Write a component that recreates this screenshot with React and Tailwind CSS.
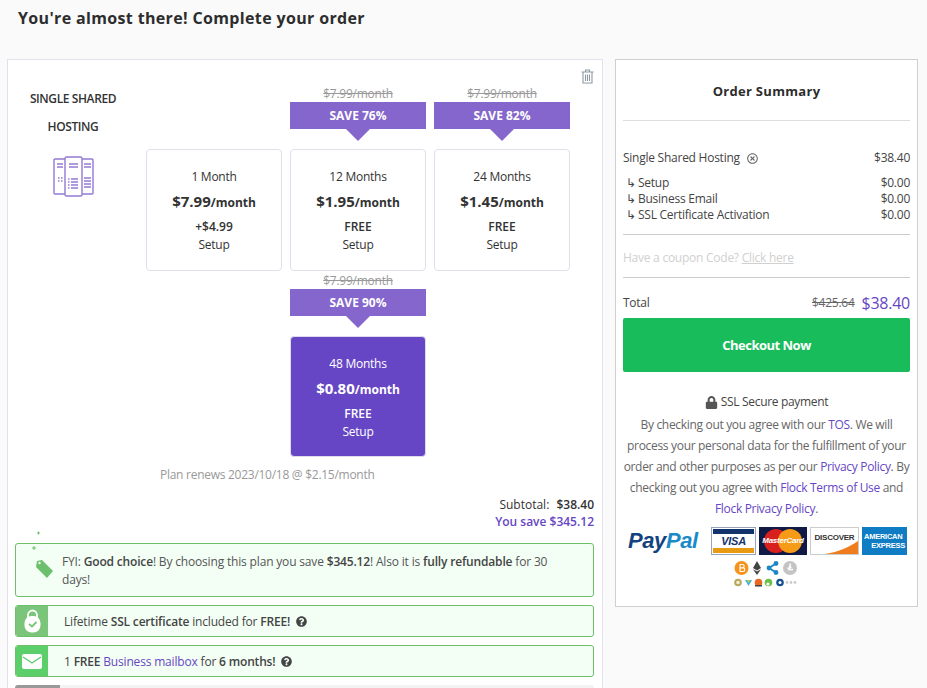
import React from "react";
import { FaQuestionCircle, FaLock, FaRegTimesCircle } from "react-icons/fa";

const font = { fontFamily: '"Open Sans", "Noto Sans", sans-serif' };
const arial = { fontFamily: '"Liberation Sans", sans-serif' };

function ServerIcon() {
  return (
    <svg width="41" height="41" viewBox="0 0 41 41" fill="none" stroke="#9479d4" strokeWidth="1.4">
      <rect x="1" y="3" width="12" height="35" rx="1" />
      <rect x="28" y="3" width="12" height="35" rx="1" />
      <rect x="12" y="1" width="17" height="39" rx="1.5" fill="#fff" />
      <path d="M16 8h9M16 11h9M18 23h7M18 26h7M18 29h7M18 32h7M31 8h7M31 11h7M31 22h7M31 25h7M31 28h7M31 31h7M4 8h6M4 11h6" />
      <path d="M15 23h1.5M15 26h1.5M15 29h1.5M15 32h1.5M5 22h1.5M8 22h1.5M5 25h1.5M8 25h1.5" />
    </svg>
  );
}

function Trash() {
  return (
    <svg width="13" height="15" viewBox="0 0 13 15" fill="none" stroke="#8f99a3" strokeWidth="1.1">
      <path d="M.5 3h12M4.5 3V1h4v2M2 3v11h9V3M4.5 5.5v6.5M6.5 5.5v6.5M8.5 5.5v6.5" />
    </svg>
  );
}

function Plan({ months, price, setup, save, selected }) {
  return (
    <div className="flex flex-col">
      {save && (
        <>
          <div className="h-[17px] flex items-center justify-center text-[12px] text-[#999] line-through">$7.99/month</div>
          <div className="h-[27px] bg-[#8566cc] text-white text-[12px] font-bold tracking-normal flex items-center justify-center">SAVE {save}%</div>
          <div className="h-[20px] flex justify-center">
            <svg width="24" height="12" viewBox="0 0 24 12"><path d="M0 0h24L12 12z" fill="#8566cc" /></svg>
          </div>
        </>
      )}
      <div className={selected ? "h-[121px] rounded-[4px] border border-[#dcdcec] bg-[#6646c4] text-white text-center pt-[19px]" : "h-[122px] rounded-[4px] border border-[#e0e0ea] bg-white text-[#333] text-center pt-[19px]"}>
        <div className="h-4 leading-4 text-[12px]">{months}</div>
        <div className="h-6 leading-6 mt-1 font-bold text-[15px] tracking-normal">{price}<span className="text-[12px]">/month</span></div>
        <div className="h-4 leading-4 mt-[6px] font-semibold text-[12px] tracking-normal">{setup}</div>
        <div className="h-4 leading-4 mt-[2px] text-[12px]">Setup</div>
      </div>
    </div>
  );
}

function Perk({ icon, iconBg, children }) {
  return (
    <div className="h-8 flex items-center rounded-[3px] border border-[#6ebf6a] bg-[#f3fff5] overflow-hidden text-[12px] text-[#444] tracking-[-0.18px]">
      <div className={iconBg}>{icon}</div>
      <div className="pl-4 pt-px flex items-center gap-[6px]">{children}</div>
    </div>
  );
}

function Card({ bg, children }) {
  return <div className={bg}>{children}</div>;
}

export default function App() {
  return (
    <div style={font} className="h-[688px] overflow-hidden bg-[#fafafa] text-[#333] tracking-[-0.25px]">
      <h1 className="h-[59px] pl-[18px] pt-[6px] text-[16px] leading-6 font-bold text-[#2d2d2d] tracking-[0.35px]">You're almost there! Complete your order</h1>
      <div className="flex items-start pl-[7px] gap-3">
        {/* left */}
        <div className="relative w-[596px] bg-white border border-[#e2e2ec] pl-[7px] pr-2 pb-[20px]">
          <div className="absolute right-[8px] top-[9px]"><Trash /></div>
          <div className="flex pt-[25px]">
            <div className="w-[116px] shrink-0 flex flex-col items-center text-[12px] leading-[28px] font-semibold text-[#333] text-center tracking-[-0.4px]">
              <div>SINGLE SHARED<br />HOSTING</div>
              <div className="mt-[15px]"><ServerIcon /></div>
            </div>
            <div className="ml-[15px] grid grid-cols-[136px_136px_136px] gap-x-2 gap-y-px items-end">
              <Plan months="1 Month" price="$7.99" setup="+$4.99" />
              <Plan months="12 Months" price="$1.95" setup="FREE" save="76" />
              <Plan months="24 Months" price="$1.45" setup="FREE" save="82" />
              <div />
              <Plan months="48 Months" price="$0.80" setup="FREE" save="90" selected />
            </div>
          </div>
          <div className="h-4 leading-4 mt-[10px] ml-[145px] text-[12px] text-[#999] tracking-[-0.27px]">Plan renews 2023/10/18 @ $2.15/month</div>
          <div className="h-4 leading-4 mt-[14px] text-right text-[12px] text-[#333] tracking-normal">Subtotal: <b className="ml-1 font-semibold">$38.40</b></div>
          <div className="h-4 leading-4 mt-px text-right text-[12px] font-semibold text-[#6646c4] tracking-normal">You save $345.12</div>
          <div className="relative mt-[13px] h-[54px] rounded-[3px] border border-[#6ebf6a] bg-[#f3fff5] pl-[46px] pr-[30px] pt-[9px] text-[12px] leading-[18px] text-[#555] tracking-[-0.17px]">
            FYI: <b className="font-semibold text-[#444]">Good choice</b>! By choosing this plan you save <b className="font-semibold text-[#444]">$345.12</b>! Also it is <b className="font-semibold text-[#444]">fully refundable</b> for 30 days!
            <svg className="absolute left-[13px] -top-[13px]" width="26" height="50" viewBox="0 0 26 50">
              <path d="M8 2h3M9.5.5v3M3 17h4M5 15v4" stroke="#6ebf6a" strokeWidth="1" fill="none" />
              <path d="M8 30l5-1 11 11-6 7L7 36z" fill="#6cc06c" />
              <circle cx="10.5" cy="32" r="1.2" fill="#f3fff5" />
            </svg>
          </div>
          <div className="flex flex-col gap-2 mt-2">
            <Perk iconBg="w-8 self-stretch shrink-0 bg-[#7ac579] flex items-center justify-center"
              icon={<svg width="17" height="24" viewBox="0 0 17 24"><path d="M4 9V6a4.5 4.5 0 019 0v3" stroke="#fff" strokeWidth="1.8" fill="none" /><rect x="0.5" y="7" width="16" height="16.5" rx="7" fill="#fff" /><path d="M5 15l3 2.5L12.5 13" stroke="#7ac579" strokeWidth="1.8" fill="none" /></svg>}>
              <span>Lifetime <b className="font-semibold">SSL certificate</b> included for <b className="font-semibold">FREE!</b></span>
              <FaQuestionCircle className="text-[#444] text-[11px]" />
            </Perk>
            <Perk iconBg="w-8 self-stretch shrink-0 bg-[#5cce6a] flex items-center justify-center"
              icon={<svg width="20" height="15" viewBox="0 0 20 15"><rect width="20" height="15" rx="2" fill="#fff" /><path d="M1 3l9 6 9-6" stroke="#5cce6a" strokeWidth="1.3" fill="none" /></svg>}>
              <span>1 <b className="font-semibold">FREE</b> <span className="text-[#6646c4]">Business mailbox</span> for <b className="font-semibold">6 months!</b></span>
              <FaQuestionCircle className="text-[#444] text-[11px]" />
            </Perk>
            <div className="h-8 flex rounded-[3px] bg-[#f3f3f3] overflow-hidden">
              <div className="w-[45px] bg-[#999]" />
            </div>
          </div>
        </div>
        {/* right */}
        <div className="w-[303px] h-[548px] bg-white border border-[#cfcfcf] px-[7px]">
          <div className="h-[61px] pt-[3px] border-b border-[#ddd] flex items-center justify-center text-[13px] font-bold text-[#2d2d2d] tracking-[0.3px]">Order Summary</div>
          <div className="mt-[29px] h-4 leading-4 flex justify-between text-[12px] text-[#444]">
            <span className="flex items-center gap-[7px]">Single Shared Hosting <FaRegTimesCircle className="text-[#666] text-[11px]" /></span>
            <span>$38.40</span>
          </div>
          <div className="mt-[9px] text-[12px] leading-4 text-[#444] border-b border-[#ccc] pb-[11px]">
            <div className="flex justify-between"><span><span className="inline-block w-[15px] pl-[3px]">↳</span>Setup</span><span>$0.00</span></div>
            <div className="flex justify-between"><span><span className="inline-block w-[15px] pl-[3px]">↳</span>Business Email</span><span>$0.00</span></div>
            <div className="flex justify-between"><span><span className="inline-block w-[15px] pl-[3px]">↳</span>SSL Certificate Activation</span><span>$0.00</span></div>
          </div>
          <div className="h-[43px] pt-[3px] border-b border-[#ccc] flex items-center text-[12px] text-[#d0d0d0]">Have a coupon Code?&nbsp;<span className="underline">Click here</span></div>
          <div className="h-[40px] pb-[7px] flex items-end justify-between text-[12px] text-[#444]">
            <span className="leading-4">Total</span>
            <span className="flex items-center gap-[7px] leading-4"><span className="line-through text-[#666]">$425.64</span><span className="text-[16px] text-[#6646c4]">$38.40</span></span>
          </div>
          <div className="h-[54px] pt-px rounded-[2px] bg-[#18bc5b] text-white font-bold text-[13px] tracking-[-0.5px] flex items-center justify-center">Checkout Now</div>
          <div className="mt-[22px] h-4 flex items-center justify-center gap-[3px] text-[12px] text-[#444] tracking-[-0.33px]"><FaLock className="text-[#555] text-[13px]" />SSL Secure payment</div>
          <p className="mt-[4px] text-center text-[12px] leading-[21px] text-[#666] tracking-[-0.32px]">
            By checking out you agree with our <span className="text-[#6646c4]">TOS</span>. We will process your personal data for the fulfillment of your order and other purposes as per our <span className="text-[#6646c4]">Privacy Policy</span>. By checking out you agree with <span className="text-[#6646c4]">Flock Terms of Use</span> and <span className="text-[#6646c4]">Flock Privacy Policy</span>.
          </p>
          <div className="mt-2 flex items-center gap-[3px] h-[28px]">
            <div className="w-[85px] pl-[5px] italic font-extrabold text-[22px] leading-none whitespace-nowrap tracking-[-0.4px]" style={arial}>
              <span className="text-[#13437f]">Pay</span><span className="text-[#1b8ac8]">Pal</span>
            </div>
            <Card bg="w-[45px] h-[28px] border border-[#9aa3bd] bg-white flex flex-col justify-between p-[1px]">
              <div className="h-[5px] bg-[#13336f]" />
              <div className="text-center italic font-extrabold text-[11px] leading-none text-[#13336f]" style={arial}>VISA</div>
              <div className="h-[5px] bg-[#e89a12]" />
            </Card>
            <Card bg="relative w-[48px] h-[28px] bg-[#101a44] flex items-center justify-center overflow-hidden">
              <div className="absolute left-[5px] top-[2px] w-6 h-6 rounded-full bg-[#d8201e]" />
              <div className="absolute right-[5px] top-[2px] w-6 h-6 rounded-full bg-[#f59b18]" />
              <span className="relative text-[8px] font-bold italic text-white whitespace-nowrap" style={arial}>MasterCard</span>
            </Card>
            <Card bg="relative w-[49px] h-[28px] border border-[#ccc] bg-white overflow-hidden">
              <div className="relative z-10 text-center text-[8px] font-bold leading-[20px] text-[#333]" style={arial}>DISCOVER</div>
              <svg className="absolute inset-0" width="47" height="26" viewBox="0 0 47 26"><path d="M47 13v13H14C28 24 38 19 47 13z" fill="#ef7d1d" /></svg>
            </Card>
            <Card bg="w-[45px] h-[28px] bg-[#0f7cc3] flex flex-col justify-center text-white text-[7.5px] leading-[9px] font-bold">
              <span className="pl-[2px] whitespace-nowrap" style={arial}>AMERICAN</span>
              <span className="text-right pr-[2px]" style={arial}>EXPRESS</span>
            </Card>
          </div>
          <div className="mt-[5px] flex justify-center pr-[1px]">
            <svg width="64" height="16" viewBox="0 0 64 16">
              <circle cx="7.5" cy="8" r="7" fill="#f7931a" />
              <path d="M6 4.5h2.5a1.6 1.6 0 010 3.4H6zM6 8h3a1.7 1.7 0 010 3.5H6z" stroke="#fff" strokeWidth="1.1" fill="none" />
              <path d="M23 1l4 7-4 2.5L19 8zM23 15l4-5.8-4 2.4-4-2.4z" fill="#444" />
              <circle cx="35" cy="8" r="2.4" fill="#1b87c4" /><circle cx="42" cy="3.5" r="2.4" fill="#1b87c4" /><circle cx="42" cy="12.5" r="2.4" fill="#1b87c4" />
              <path d="M35 8l7-4.5M35 8l7 4.5" stroke="#1b87c4" strokeWidth="2" />
              <circle cx="56" cy="8" r="7" fill="#c4c4c4" />
              <path d="M56.5 3.5L55 9.5h4M53.5 8.5l4-1.3" stroke="#fff" strokeWidth="1.4" fill="none" />
            </svg>
          </div>
          <div className="mt-[2px] flex justify-center pr-[1px]">
            <svg width="64" height="9" viewBox="0 0 64 9">
              <circle cx="4" cy="4.5" r="3.8" fill="#b8a75f" /><circle cx="4" cy="4.5" r="1.8" fill="#f2edd5" />
              <path d="M11 2h7l-3.5 6z" fill="#3cb6d9" /><path d="M13 2h3l-1.5 3z" fill="#e3c72f" />
              <circle cx="24.5" cy="4.5" r="3.8" fill="#e56a25" /><path d="M21 7h7v1.5h-7z" fill="#444" />
              <circle cx="34.5" cy="4.5" r="3.8" fill="#6cc04a" /><circle cx="34" cy="6" r="1.6" fill="#fff" />
              <circle cx="46" cy="4.5" r="3.8" fill="#14508f" /><circle cx="46" cy="4.5" r="1.5" fill="#fff" />
              <circle cx="53" cy="4.5" r="1.4" fill="#ccc" /><circle cx="57" cy="4.5" r="1.4" fill="#ccc" /><circle cx="61" cy="4.5" r="1.4" fill="#ccc" />
            </svg>
          </div>
        </div>
      </div>
    </div>
  );
}
